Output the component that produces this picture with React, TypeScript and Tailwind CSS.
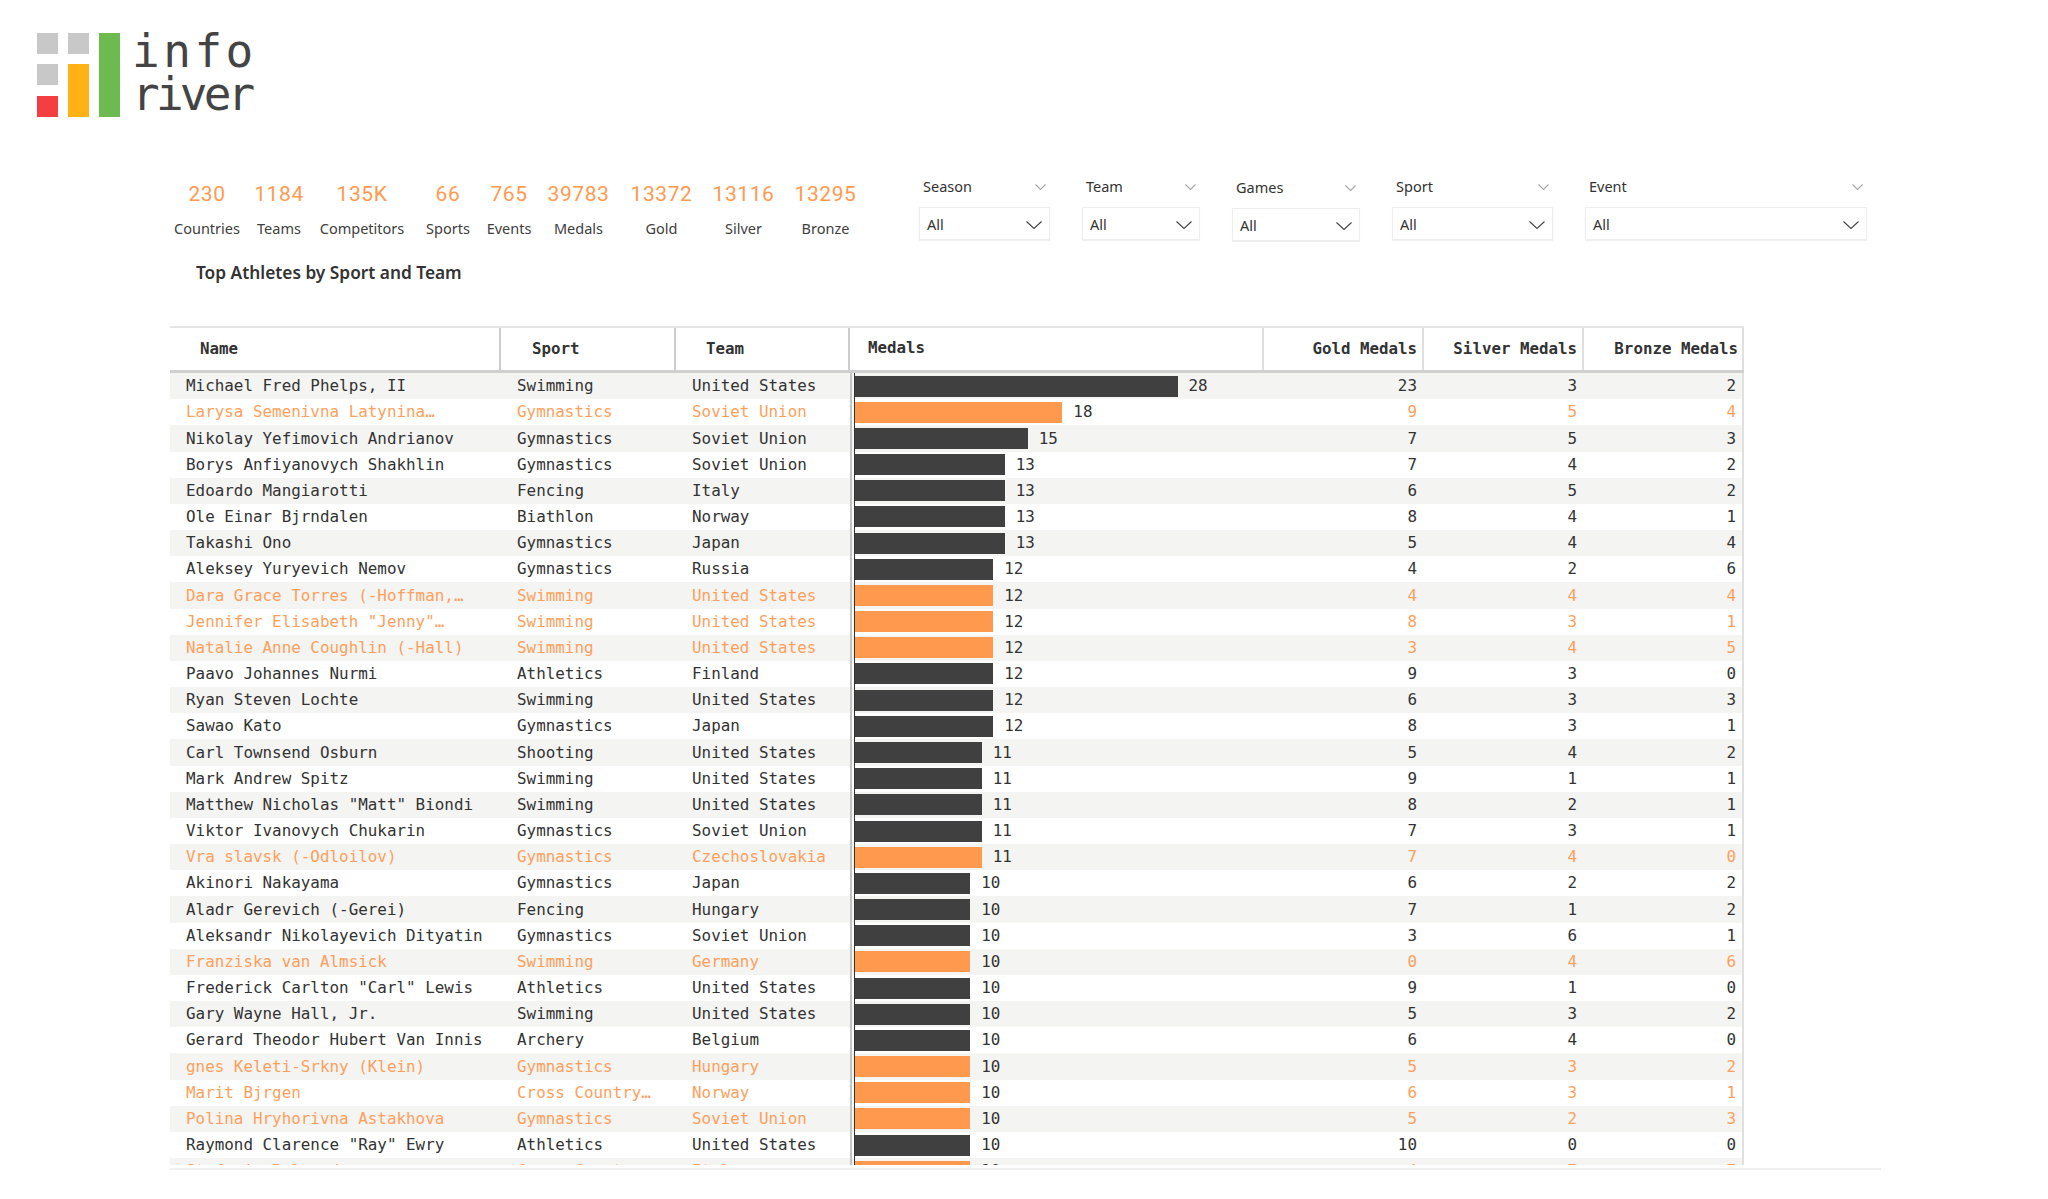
import React from 'react';

type Athlete = [string, string, string, number, number, number, number, boolean?];

const kpis = [
  { value: '230', label: 'Countries', width: 'w-[70px]' },
  { value: '1184', label: 'Teams', width: 'w-[74px]' },
  { value: '135K', label: 'Competitors', width: 'w-[92px]' },
  { value: '66', label: 'Sports', width: 'w-[80px]' },
  { value: '765', label: 'Events', width: 'w-[42px]' },
  { value: '39783', label: 'Medals', width: 'w-[97px]' },
  { value: '13372', label: 'Gold', width: 'w-[69px]' },
  { value: '13116', label: 'Silver', width: 'w-[95px]' },
  { value: '13295', label: 'Bronze', width: 'w-[69px]' },
];

const slicers = [
  { label: 'Season', width: 'w-[131px]', offset: 'mt-0' },
  { label: 'Team', width: 'w-[118px]', offset: 'mt-0' },
  { label: 'Games', width: 'w-[128px]', offset: 'mt-[1px]' },
  { label: 'Sport', width: 'w-[161px]', offset: 'mt-0' },
  { label: 'Event', width: 'w-[282px]', offset: 'mt-0' },
];

const athletes: Athlete[] = [
  ['Michael Fred Phelps, II', 'Swimming', 'United States', 28, 23, 3, 2],
  ['Larysa Semenivna Latynina…', 'Gymnastics', 'Soviet Union', 18, 9, 5, 4, true],
  ['Nikolay Yefimovich Andrianov', 'Gymnastics', 'Soviet Union', 15, 7, 5, 3],
  ['Borys Anfiyanovych Shakhlin', 'Gymnastics', 'Soviet Union', 13, 7, 4, 2],
  ['Edoardo Mangiarotti', 'Fencing', 'Italy', 13, 6, 5, 2],
  ['Ole Einar Bjrndalen', 'Biathlon', 'Norway', 13, 8, 4, 1],
  ['Takashi Ono', 'Gymnastics', 'Japan', 13, 5, 4, 4],
  ['Aleksey Yuryevich Nemov', 'Gymnastics', 'Russia', 12, 4, 2, 6],
  ['Dara Grace Torres (-Hoffman,…', 'Swimming', 'United States', 12, 4, 4, 4, true],
  ['Jennifer Elisabeth "Jenny"…', 'Swimming', 'United States', 12, 8, 3, 1, true],
  ['Natalie Anne Coughlin (-Hall)', 'Swimming', 'United States', 12, 3, 4, 5, true],
  ['Paavo Johannes Nurmi', 'Athletics', 'Finland', 12, 9, 3, 0],
  ['Ryan Steven Lochte', 'Swimming', 'United States', 12, 6, 3, 3],
  ['Sawao Kato', 'Gymnastics', 'Japan', 12, 8, 3, 1],
  ['Carl Townsend Osburn', 'Shooting', 'United States', 11, 5, 4, 2],
  ['Mark Andrew Spitz', 'Swimming', 'United States', 11, 9, 1, 1],
  ['Matthew Nicholas "Matt" Biondi', 'Swimming', 'United States', 11, 8, 2, 1],
  ['Viktor Ivanovych Chukarin', 'Gymnastics', 'Soviet Union', 11, 7, 3, 1],
  ['Vra slavsk (-Odloilov)', 'Gymnastics', 'Czechoslovakia', 11, 7, 4, 0, true],
  ['Akinori Nakayama', 'Gymnastics', 'Japan', 10, 6, 2, 2],
  ['Aladr Gerevich (-Gerei)', 'Fencing', 'Hungary', 10, 7, 1, 2],
  ['Aleksandr Nikolayevich Dityatin', 'Gymnastics', 'Soviet Union', 10, 3, 6, 1],
  ['Franziska van Almsick', 'Swimming', 'Germany', 10, 0, 4, 6, true],
  ['Frederick Carlton "Carl" Lewis', 'Athletics', 'United States', 10, 9, 1, 0],
  ['Gary Wayne Hall, Jr.', 'Swimming', 'United States', 10, 5, 3, 2],
  ['Gerard Theodor Hubert Van Innis', 'Archery', 'Belgium', 10, 6, 4, 0],
  ['gnes Keleti-Srkny (Klein)', 'Gymnastics', 'Hungary', 10, 5, 3, 2, true],
  ['Marit Bjrgen', 'Cross Country…', 'Norway', 10, 6, 3, 1, true],
  ['Polina Hryhorivna Astakhova', 'Gymnastics', 'Soviet Union', 10, 5, 2, 3, true],
  ['Raymond Clarence "Ray" Ewry', 'Athletics', 'United States', 10, 10, 0, 0],
  ['Stefania Belmondo', 'Cross Country…', 'Italy', 10, 4, 7, 7, true],
];

function Chevron({ width, height, color }: { width: number; height: number; color: string }) {
  return (
    <svg width={width} height={height} viewBox={`0 0 ${width} ${height}`} fill="none" className="shrink-0">
      <polyline points={`0.5,0.5 ${width / 2},${height - 0.5} ${width - 0.5},0.5`} stroke={color} strokeWidth="1.1" />
    </svg>
  );
}

function Logo() {
  return (
    <div className="flex items-start pl-[37px]">
      <svg width="84" height="84" viewBox="0 0 84 84" className="mt-[3px] shrink-0">
        <rect x="0" y="0" width="21" height="21" fill="#c8c8c8" />
        <rect x="31" y="0" width="21" height="21" fill="#c8c8c8" />
        <rect x="0" y="31" width="21" height="21" fill="#c8c8c8" />
        <rect x="31" y="31" width="21" height="53" fill="#ffb115" />
        <rect x="0" y="63" width="21" height="21" fill="#f33f3f" />
        <rect x="62" y="0" width="21" height="84" fill="#6dbb50" />
      </svg>
      <div className="ml-[11px] font-['DejaVu_Sans_Mono',monospace] text-[46px] leading-[43px] text-[#444444]">
        <div className="tracking-[3.5px]">info</div>
        <div className="tracking-[-3.8px]">river</div>
      </div>
    </div>
  );
}

function Kpis() {
  return (
    <div className="flex shrink-0 pt-[3px] font-['Noto_Sans',sans-serif]">
      {kpis.map((k) => (
        <div key={k.label} className={`${k.width} flex flex-col items-center`}>
          <div className="font-['Roboto',sans-serif] text-[21px] leading-[26px] tracking-[0.6px] text-[#ff9a50]">{k.value}</div>
          <div className="mt-[11px] whitespace-nowrap text-[14.5px] leading-[20px] text-[#404040]">{k.label}</div>
        </div>
      ))}
    </div>
  );
}

function Slicers() {
  return (
    <div className="ml-[59px] flex gap-[32px] font-['Noto_Sans',sans-serif] text-[14.5px] text-[#333333]">
      {slicers.map((s) => (
        <div key={s.label} className={`${s.width} ${s.offset}`}>
          <div className="flex h-[29px] items-center justify-between pl-[4px] pr-[4px] pb-[11px]">
            <span>{s.label}</span>
            <Chevron width={11} height={6} color="#a6a6a6" />
          </div>
          <div className="flex h-[33px] items-center justify-between border border-[#eeeeee] pl-[7px] pr-[7px] pt-[2px] shadow-[0_1px_1px_rgba(0,0,0,0.06)]">
            <span>All</span>
            <Chevron width={16} height={8} color="#444444" />
          </div>
        </div>
      ))}
    </div>
  );
}

function TableHeader() {
  return (
    <div className="flex h-[47px] border-t-2 border-b-[3px] border-t-[#e4e4e4] border-b-[#d0d0d0] text-[15.8px] font-bold text-[#333333]">
      <div className="flex w-[331px] items-center border-r-2 border-[#cccccc] pl-[30px]">Name</div>
      <div className="flex w-[175px] items-center border-r-2 border-[#cccccc] pl-[31px]">Sport</div>
      <div className="flex w-[174px] items-center border-r-2 border-[#cccccc] pl-[30px]">Team</div>
      <div className="flex w-[414px] items-center border-r-2 border-[#e0e0e0] pb-[2px] pl-[18px]">Medals</div>
      <div className="flex w-[160px] items-center justify-end border-r-2 border-[#e0e0e0] pr-[5px]">Gold Medals</div>
      <div className="flex w-[160px] items-center justify-end border-r-2 border-[#e0e0e0] pr-[5px]">Silver Medals</div>
      <div className="flex w-[160px] items-center justify-end border-r-2 border-[#e0e0e0] pr-[4px]">Bronze Medals</div>
    </div>
  );
}

function Row({ row, index }: { row: Athlete; index: number }) {
  const [name, sport, team, medals, gold, silver, bronze, picked] = row;
  return (
    <div className={`flex h-[26.18px] items-center text-[15.9px] ${index % 2 === 0 ? 'bg-[#f4f4f2]' : 'bg-white'} ${picked ? 'text-[#ff9f5c]' : 'text-[#333333]'}`}>
      <div className="w-[331px] whitespace-nowrap pl-[16px]">{name}</div>
      <div className="w-[175px] whitespace-nowrap pl-[16px]">{sport}</div>
      <div className="w-[174px] whitespace-nowrap pl-[16px]">{team}</div>
      <div className="flex h-full w-[414px] items-center border-l-2 border-[#c4c4c4] pl-[2px] text-[#333333]">
        <div className="flex h-full items-center border-l border-[#333333]">
          <div className={`h-[21px] ${picked ? 'bg-[#ff994d]' : 'bg-[#404040]'}`} style={{ width: medals * 11.52 }} />
          <span className="ml-[11px]">{medals}</span>
        </div>
      </div>
      <div className="w-[160px] pr-[7px] text-right">{gold}</div>
      <div className="w-[160px] pr-[7px] text-right">{silver}</div>
      <div className="w-[158px] pr-[6px] text-right">{bronze}</div>
    </div>
  );
}

export default function App() {
  return (
    <div className="h-[1199px] w-[2048px] overflow-hidden bg-white">
      <div className="h-[178px] pt-[30px]">
        <Logo />
      </div>
      <div className="flex h-[78px] pl-[172px]">
        <Kpis />
        <Slicers />
      </div>
      <div className="ml-[196px] h-[70px] pt-[5px] font-['Noto_Sans',sans-serif] text-[17.3px] leading-[24px] font-semibold text-[#333333]">
        Top Athletes by Sport and Team
      </div>
      <div className="ml-[170px] w-[1711px] border-b-2 border-[#f0f0f0] pb-[3px]">
        <div className="w-[1574px] font-['DejaVu_Sans_Mono',monospace]">
          <TableHeader />
          <div className="h-[792px] overflow-hidden border-r-2 border-[#e0e0e0]">
            {athletes.map((row, i) => (
              <Row key={row[0]} row={row} index={i} />
            ))}
          </div>
        </div>
      </div>
    </div>
  );
}
